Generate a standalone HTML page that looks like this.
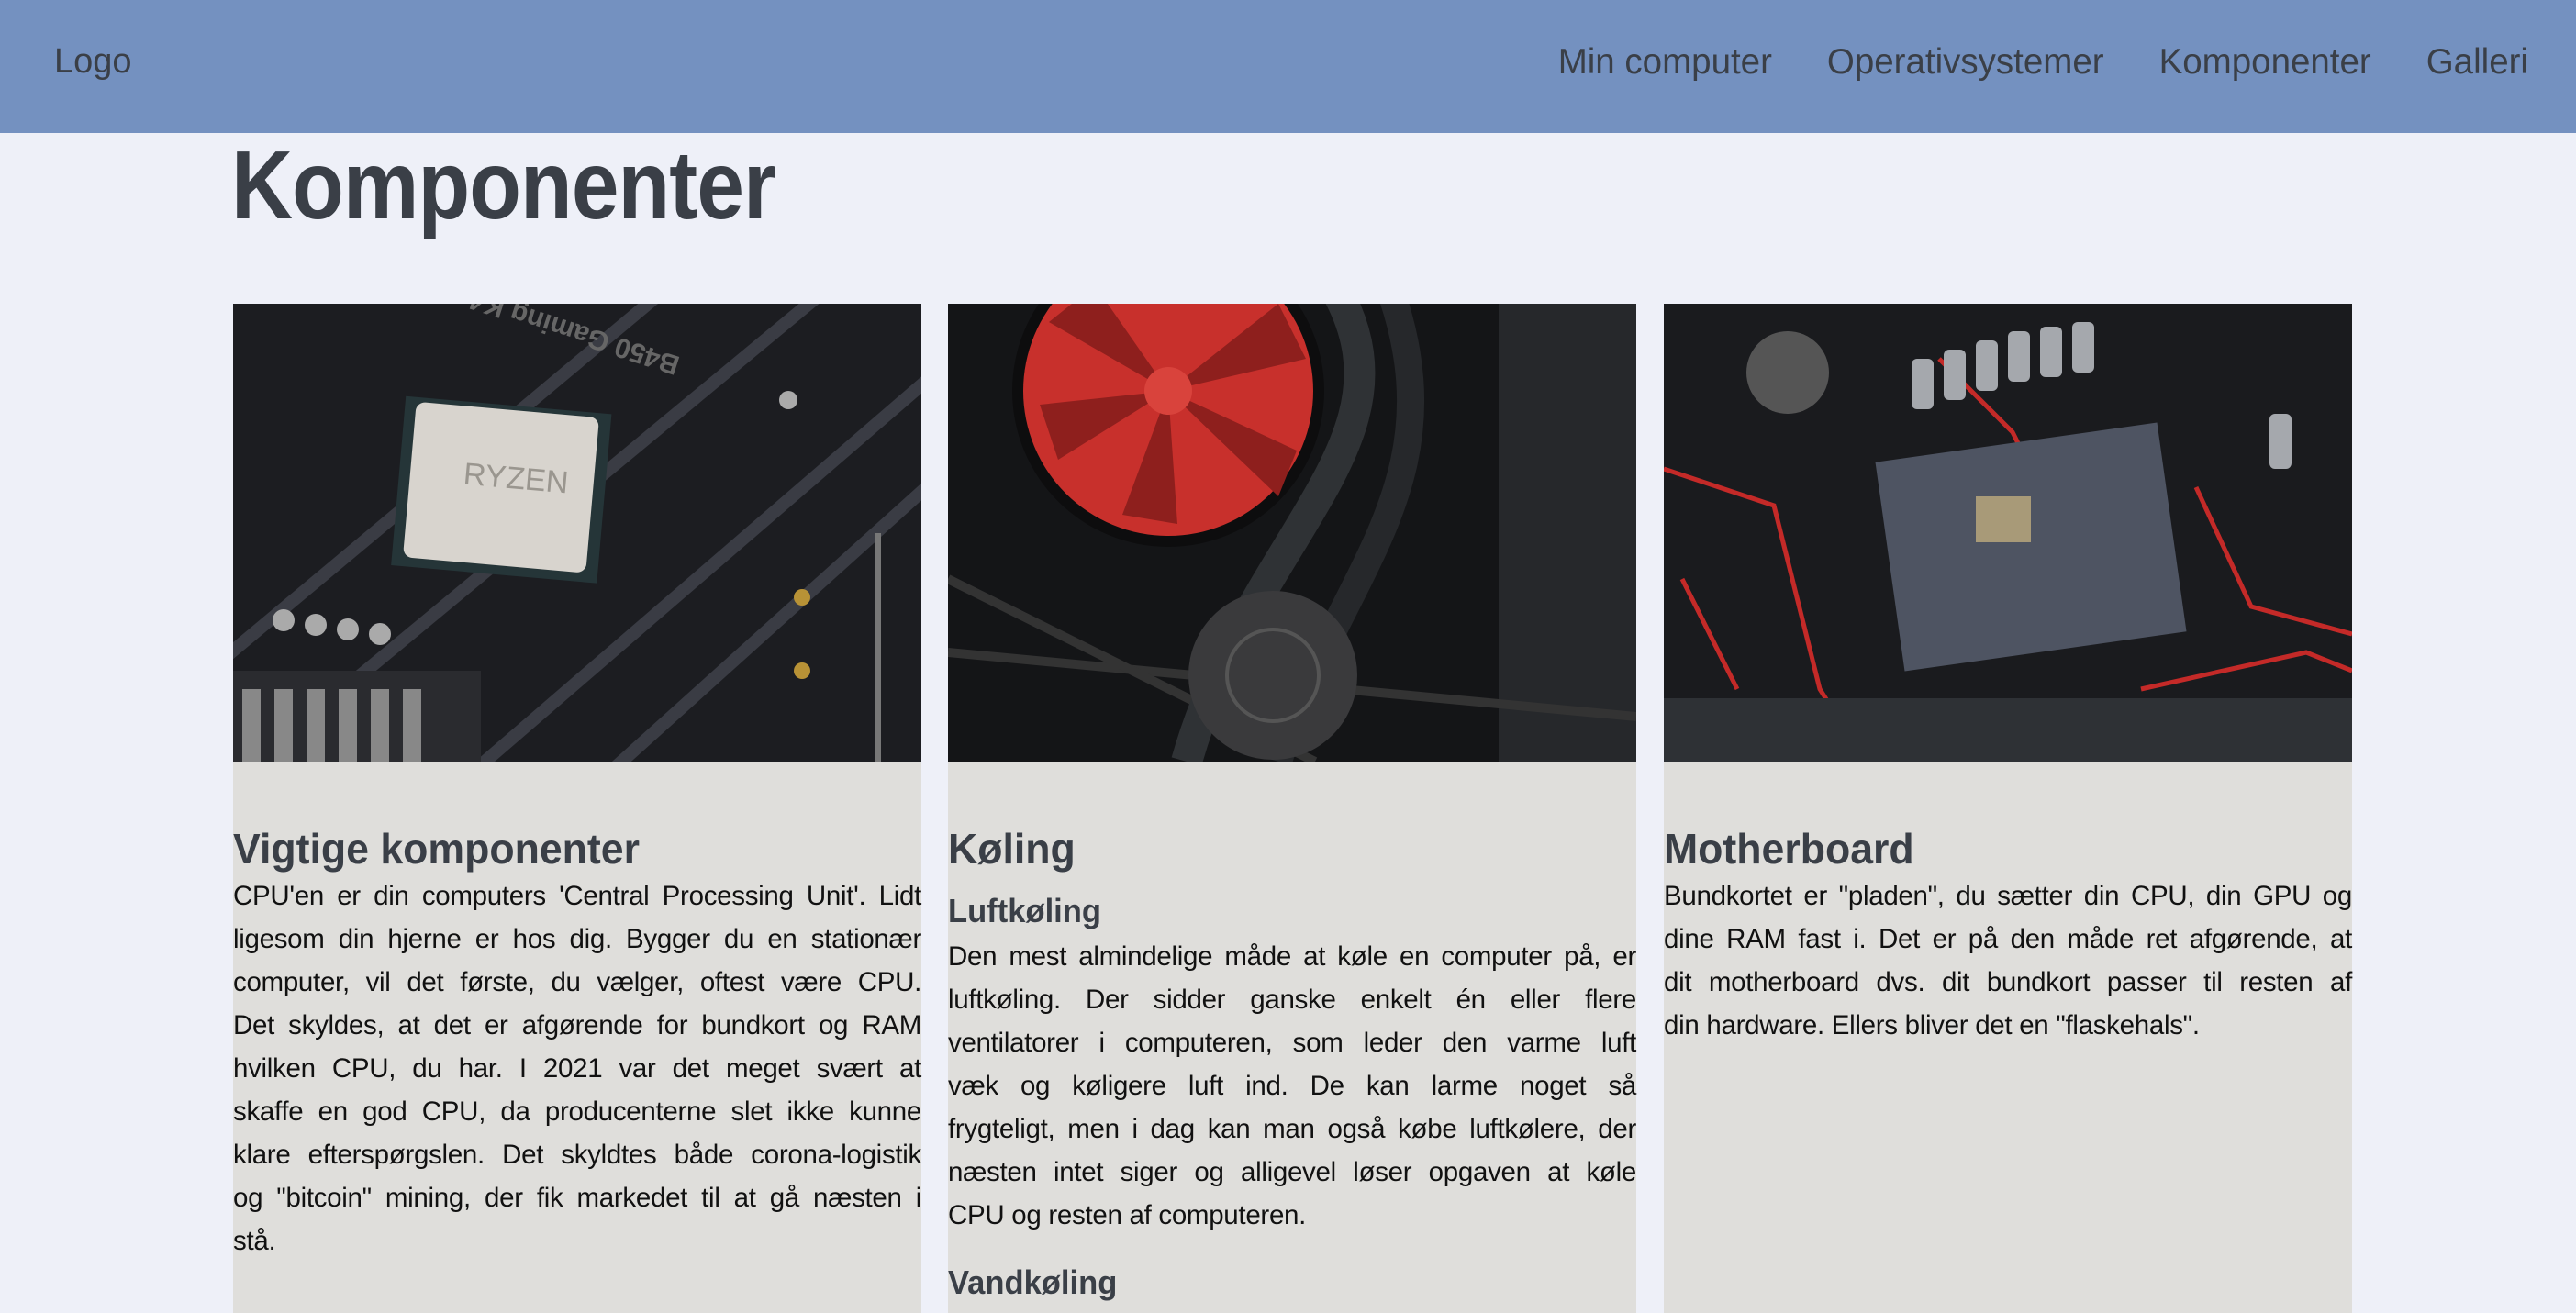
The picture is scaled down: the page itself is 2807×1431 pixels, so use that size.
<!DOCTYPE html>
<html><head><meta charset="utf-8">
<style>
*{margin:0;padding:0;box-sizing:border-box}
html,body{width:2807px;height:1396px;overflow:hidden;background:#eef0f8;font-family:"Liberation Sans",sans-serif}
nav{position:absolute;left:0;top:0;width:2807px;height:145px;background:#7491c0;color:#3a3f47}
.logo{position:absolute;left:59px;top:46px;font-size:38px}
.menu{position:absolute;right:52px;top:46px;font-size:38.5px;display:flex;gap:60px}
h1{position:absolute;left:252px;top:142px;font-weight:bold;font-size:106px;color:#3a3f47;letter-spacing:-1px;transform:scaleX(0.875);transform-origin:left}
.card{position:absolute;top:331px;width:750px;height:1100px;background:#dfdedb}
.card svg{display:block;width:750px;height:499px}
h2{font-weight:bold;font-size:46px;color:#3a3f47;margin-top:67px;line-height:56px;transform:scaleX(0.97);transform-origin:left}
h3{font-weight:bold;font-size:36px;color:#3a3f47;line-height:52px;margin-top:14px;transform:scaleX(0.96);transform-origin:left}
.t{font-size:29.5px;line-height:47px;color:#111;letter-spacing:-0.3px}
.t span{display:block;text-align:justify;text-align-last:justify;white-space:nowrap}
.t span.l{text-align-last:left}
</style></head><body>
<nav><div class="logo">Logo</div>
<div class="menu"><span>Min computer</span><span>Operativsystemer</span><span>Komponenter</span><span>Galleri</span></div></nav>
<h1>Komponenter</h1>

<div class="card" style="left:254px">
<svg viewBox="0 0 750 499">
<rect width="750" height="499" fill="#1c1d21"/>
<g stroke="#3a3c44" stroke-width="14">
<line x1="-50" y1="420" x2="500" y2="-40"/><line x1="0" y1="520" x2="700" y2="-60"/><line x1="400" y1="520" x2="800" y2="160"/><line x1="250" y1="520" x2="760" y2="80"/></g>
<rect x="0" y="400" width="270" height="99" fill="#2a2b2f"/>
<g fill="#888"><rect x="10" y="420" width="20" height="79"/><rect x="45" y="420" width="20" height="79"/><rect x="80" y="420" width="20" height="79"/><rect x="115" y="420" width="20" height="79"/><rect x="150" y="420" width="20" height="79"/><rect x="185" y="420" width="20" height="79"/></g>
<rect x="180" y="110" width="225" height="185" fill="#253538" transform="rotate(5 290 200)"/>
<rect x="192" y="115" width="200" height="170" rx="10" fill="#d8d4ce" transform="rotate(5 290 200)"/>
<text x="250" y="200" font-family="Liberation Sans" font-size="34" fill="#9a968f" transform="rotate(5 290 200)">RYZEN</text>
<g fill="#aaa"><circle cx="55" cy="345" r="12"/><circle cx="90" cy="350" r="12"/><circle cx="125" cy="355" r="12"/><circle cx="160" cy="360" r="12"/><circle cx="605" cy="105" r="10"/></g>
<circle cx="620" cy="320" r="9" fill="#b89236"/><circle cx="620" cy="400" r="9" fill="#b89236"/>
<text x="560" y="110" font-family="Liberation Sans" font-weight="bold" font-size="30" fill="#666" transform="rotate(198 520 90)">B450 Gaming K4</text>
<rect x="700" y="250" width="6" height="249" fill="#777"/>
</svg>
<h2>Vigtige komponenter</h2>
<div class="t">
<span>CPU'en er din computers 'Central Processing Unit'. Lidt</span>
<span>ligesom din hjerne er hos dig. Bygger du en stationær</span>
<span>computer, vil det første, du vælger, oftest være CPU.</span>
<span>Det skyldes, at det er afgørende for bundkort og RAM</span>
<span>hvilken CPU, du har. I 2021 var det meget svært at</span>
<span>skaffe en god CPU, da producenterne slet ikke kunne</span>
<span>klare efterspørgslen. Det skyldtes både corona-logistik</span>
<span>og "bitcoin" mining, der fik markedet til at gå næsten i</span>
<span class="l">stå.</span>
</div></div>

<div class="card" style="left:1033px">
<svg viewBox="0 0 750 499">
<rect width="750" height="499" fill="#141517"/>
<rect x="600" y="0" width="150" height="499" fill="#26282b"/>
<g stroke="#333" stroke-width="10"><line x1="0" y1="380" x2="750" y2="450"/><line x1="0" y1="300" x2="400" y2="499"/></g>
<circle cx="240" cy="95" r="170" fill="#0d0d0e"/>
<circle cx="240" cy="95" r="158" fill="#c8302c"/>
<g fill="#8e1f1d"><path d="M240 95 L110 20 L160 -20Z"/><path d="M240 95 L120 170 L100 110Z"/><path d="M240 95 L250 240 L190 230Z"/><path d="M240 95 L380 160 L360 210Z"/><path d="M240 95 L360 0 L390 60Z"/></g>
<circle cx="240" cy="95" r="26" fill="#d9433c"/>
<path d="M420 -20 C520 150 330 250 260 499" stroke="#2f3235" stroke-width="34" fill="none"/>
<path d="M480 -20 C560 200 420 300 360 499" stroke="#26282b" stroke-width="30" fill="none"/>
<circle cx="354" cy="405" r="92" fill="#3a3a3c"/>
<circle cx="354" cy="405" r="50" fill="none" stroke="#555" stroke-width="4"/>
</svg>
<h2>Køling</h2>
<h3>Luftkøling</h3>
<div class="t">
<span>Den mest almindelige måde at køle en computer på, er</span>
<span>luftkøling. Der sidder ganske enkelt én eller flere</span>
<span>ventilatorer i computeren, som leder den varme luft</span>
<span>væk og køligere luft ind. De kan larme noget så</span>
<span>frygteligt, men i dag kan man også købe luftkølere, der</span>
<span>næsten intet siger og alligevel løser opgaven at køle</span>
<span class="l">CPU og resten af computeren.</span>
</div>
<h3 style="margin-top:24px">Vandkøling</h3>
</div>

<div class="card" style="left:1813px">
<svg viewBox="0 0 750 499">
<rect width="750" height="499" fill="#1a1b1e"/>
<g stroke="#c42a28" stroke-width="5" fill="none">
<path d="M0 180 L120 220 L170 420 L220 499"/><path d="M300 60 L380 140 L420 220"/><path d="M580 200 L640 330 L750 360"/><path d="M520 420 L700 380 L750 400"/><path d="M20 300 L80 420"/></g>
<rect x="245" y="150" width="310" height="230" fill="#4e5462" transform="rotate(-8 400 265)"/>
<rect x="340" y="210" width="60" height="50" fill="#a89a78"/>
<g fill="#a5a8ad"><rect x="270" y="60" width="24" height="55" rx="6"/><rect x="305" y="50" width="24" height="55" rx="6"/><rect x="340" y="40" width="24" height="55" rx="6"/><rect x="375" y="30" width="24" height="55" rx="6"/><rect x="410" y="25" width="24" height="55" rx="6"/><rect x="445" y="20" width="24" height="55" rx="6"/><rect x="660" y="120" width="24" height="60" rx="6"/></g>
<circle cx="135" cy="75" r="45" fill="#555"/>
<rect x="0" y="430" width="750" height="69" fill="#2e3135"/>
</svg>
<h2>Motherboard</h2>
<div class="t">
<span>Bundkortet er "pladen", du sætter din CPU, din GPU og</span>
<span>dine RAM fast i. Det er på den måde ret afgørende, at</span>
<span>dit motherboard dvs. dit bundkort passer til resten af</span>
<span class="l">din hardware. Ellers bliver det en "flaskehals".</span>
</div></div>
</body></html>
